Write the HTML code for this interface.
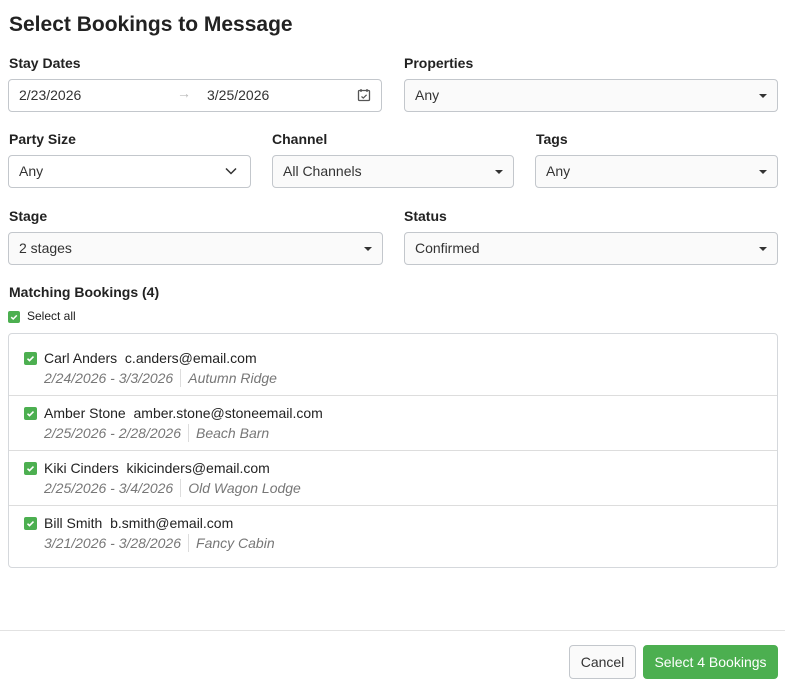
<!DOCTYPE html>
<html><head><style>
*{box-sizing:border-box;margin:0;padding:0}
body{width:785px;height:688px;background:#fff;font-family:"Liberation Sans",sans-serif;color:#222;position:relative;overflow:hidden}
.abs{position:absolute}
h1{position:absolute;left:9px;top:13px;font-size:21px;font-weight:bold;color:#222}
.lbl{position:absolute;font-size:14px;font-weight:bold;color:#222}
.box{position:absolute;height:33px;border:1px solid #c3c7cc;border-radius:4px;background:#fafafa;font-size:14px;color:#333;padding:0 10px;line-height:31px}
.caret{position:absolute;right:10px;top:14px;width:0;height:0;border-left:4px solid transparent;border-right:4px solid transparent;border-top:4px solid #333}
.chk{position:absolute;width:13px;height:13px;background:#4caf50;border-radius:2px}
.chk svg{position:absolute;left:0;top:0}
.row{position:absolute;left:0;width:768px;height:55px;border-bottom:1px solid #ddd}
.name{position:absolute;left:35px;top:9px;font-size:14px;color:#222;white-space:pre}
.sub{position:absolute;left:35px;top:28px;font-size:14px;color:#777;font-style:italic;white-space:pre}
.sep{display:inline-block;width:1px;height:18px;background:#ddd;vertical-align:-4px;margin:0 7px 0 7px}
.btn{position:absolute;height:34px;border-radius:4px;font-size:14px;line-height:32px;text-align:center}
</style></head><body>
<h1>Select Bookings to Message</h1>
<div class="lbl" style="left:9px;top:55px">Stay Dates</div>
<div class="box" style="left:8px;top:79px;width:374px;background:#fff"><span class="abs" style="left:10px">2/23/2026</span><span class="abs" style="left:168px;top:-2px;color:#bbb;font-size:14px">→</span><span class="abs" style="left:198px">3/25/2026</span>
<svg class="abs" style="left:348px;top:8px" width="14" height="14" viewBox="0 0 14 14"><rect x="1.5" y="2.5" width="11" height="10" rx="1" fill="none" stroke="#555" stroke-width="1.3"/><line x1="4" y1="1" x2="4" y2="4" stroke="#555" stroke-width="1.3"/><line x1="10" y1="1" x2="10" y2="4" stroke="#555" stroke-width="1.3"/><path d="M4.5 8.5l1.8 1.6 3.3-3.3" fill="none" stroke="#555" stroke-width="1.2"/></svg></div>
<div class="lbl" style="left:404px;top:55px">Properties</div>
<div class="box" style="left:404px;top:79px;width:374px">Any<span class="caret"></span></div>
<div class="lbl" style="left:9px;top:131px">Party Size</div>
<div class="box" style="left:8px;top:155px;width:243px;background:#fff">Any<svg class="abs" style="right:13px;top:11px" width="12" height="8" viewBox="0 0 12 8"><path d="M1 1.5l5 5 5-5" fill="none" stroke="#333" stroke-width="1.5"/></svg></div>
<div class="lbl" style="left:272px;top:131px">Channel</div>
<div class="box" style="left:272px;top:155px;width:242px">All Channels<span class="caret"></span></div>
<div class="lbl" style="left:536px;top:131px">Tags</div>
<div class="box" style="left:535px;top:155px;width:243px">Any<span class="caret"></span></div>
<div class="lbl" style="left:9px;top:208px">Stage</div>
<div class="box" style="left:8px;top:232px;width:375px">2 stages<span class="caret"></span></div>
<div class="lbl" style="left:404px;top:208px">Status</div>
<div class="box" style="left:404px;top:232px;width:374px">Confirmed<span class="caret"></span></div>
<div class="lbl" style="left:9px;top:284px">Matching Bookings (4)</div>
<div class="chk" style="left:8px;top:311px;width:12px;height:12px"><svg width="12" height="12" viewBox="0 0 12 12"><path d="M3.2 6.2l2 1.8 3.6-3.6" fill="none" stroke="#fff" stroke-width="1.5"/></svg></div>
<div class="abs" style="left:27px;top:309px;font-size:12px;color:#222">Select all</div>
<div class="abs" style="left:8px;top:333px;width:770px;height:235px;border:1px solid #d5d8dc;border-radius:4px">
<div class="row" style="top:7px"><div class="chk" style="left:15px;top:11px"><svg width="13" height="13" viewBox="0 0 13 13"><path d="M3.5 6.7l2 1.9 4-4" fill="none" stroke="#fff" stroke-width="1.6"/></svg></div><div class="name">Carl Anders  c.anders@email.com</div><div class="sub">2/24/2026 - 3/3/2026<span class="sep"></span>Autumn Ridge</div></div>
<div class="row" style="top:62px"><div class="chk" style="left:15px;top:11px"><svg width="13" height="13" viewBox="0 0 13 13"><path d="M3.5 6.7l2 1.9 4-4" fill="none" stroke="#fff" stroke-width="1.6"/></svg></div><div class="name">Amber Stone  amber.stone@stoneemail.com</div><div class="sub">2/25/2026 - 2/28/2026<span class="sep"></span>Beach Barn</div></div>
<div class="row" style="top:117px"><div class="chk" style="left:15px;top:11px"><svg width="13" height="13" viewBox="0 0 13 13"><path d="M3.5 6.7l2 1.9 4-4" fill="none" stroke="#fff" stroke-width="1.6"/></svg></div><div class="name">Kiki Cinders  kikicinders@email.com</div><div class="sub">2/25/2026 - 3/4/2026<span class="sep"></span>Old Wagon Lodge</div></div>
<div class="row" style="top:172px;border-bottom:none"><div class="chk" style="left:15px;top:11px"><svg width="13" height="13" viewBox="0 0 13 13"><path d="M3.5 6.7l2 1.9 4-4" fill="none" stroke="#fff" stroke-width="1.6"/></svg></div><div class="name">Bill Smith  b.smith@email.com</div><div class="sub">3/21/2026 - 3/28/2026<span class="sep"></span>Fancy Cabin</div></div>
</div>
<div class="abs" style="left:0;top:630px;width:785px;height:1px;background:#e2e2e2"></div>
<div class="btn" style="left:569px;top:645px;width:67px;border:1px solid #c3c7cc;background:#fafafa;color:#333">Cancel</div>
<div class="btn" style="left:643px;top:645px;width:135px;background:#4caf50;border:1px solid #4caf50;color:#fff">Select 4 Bookings</div>
</body></html>
